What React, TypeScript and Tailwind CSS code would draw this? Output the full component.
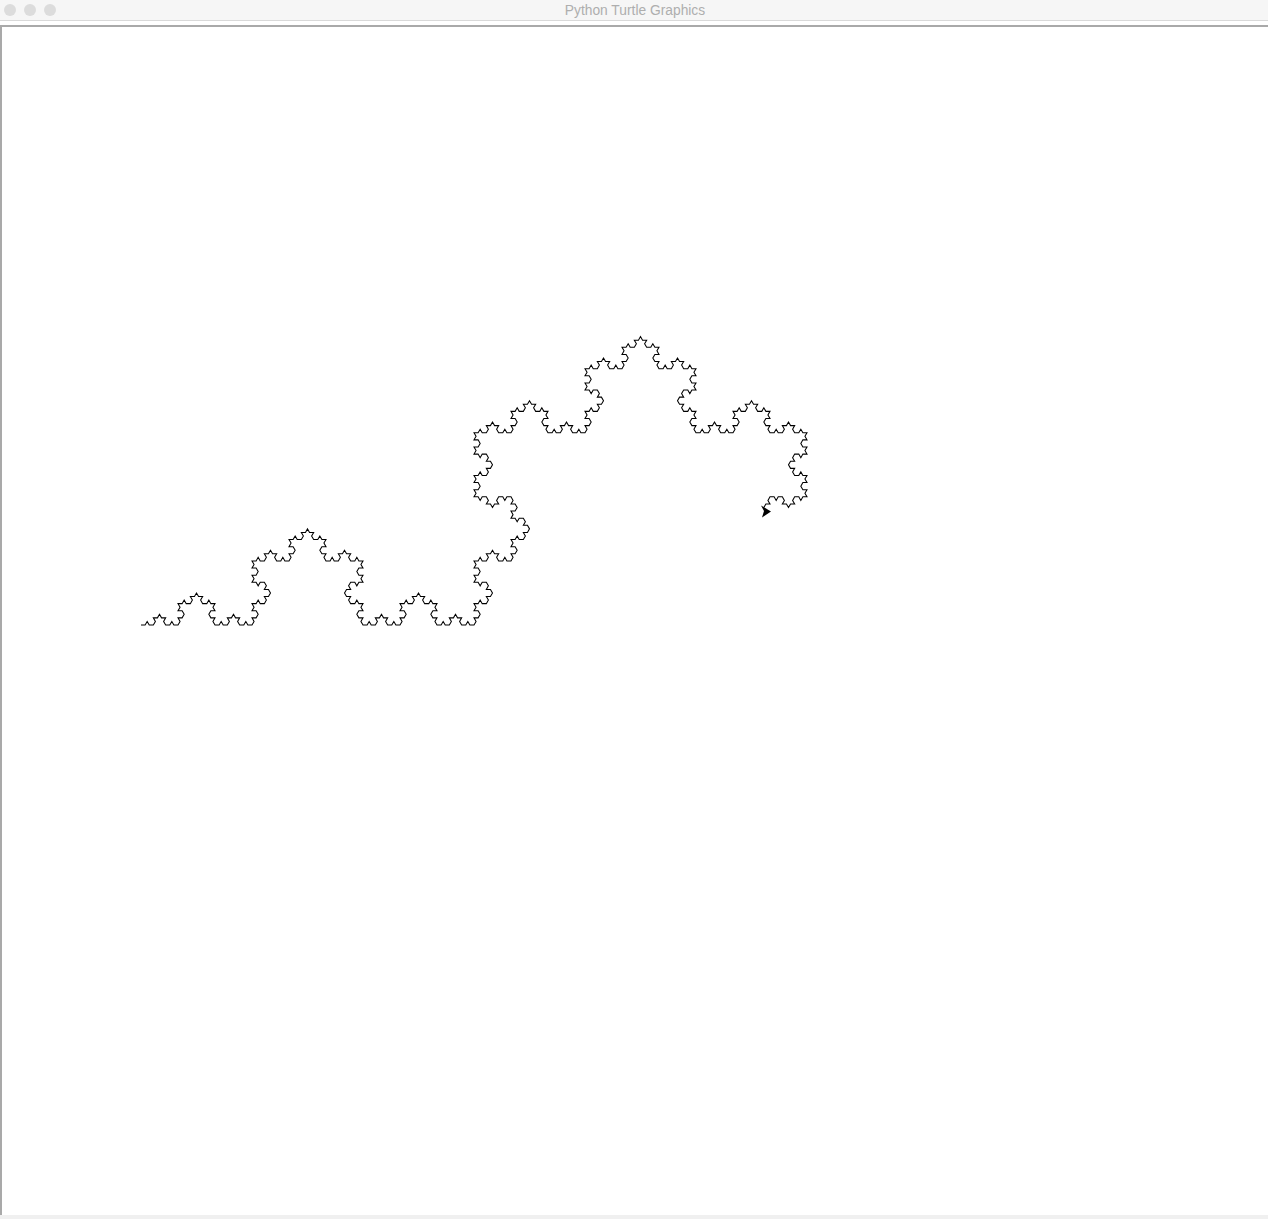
import React from 'react';

// koch curve, step is 999 / 3^5 so the full curve would be 999 wide
const buildPath = (maxSegments: number) => {
  let x = 141;
  let y = 625;
  let heading = 0;
  let count = 0;
  const step = 999 / 243;
  const points: string[] = [`M${x} ${y}`];
  const koch = (level: number) => {
    if (level === 0) {
      if (count >= maxSegments) return;
      x += step * Math.cos((heading * Math.PI) / 180);
      y -= step * Math.sin((heading * Math.PI) / 180);
      points.push(`L${x.toFixed(2)} ${y.toFixed(2)}`);
      count++;
      return;
    }
    koch(level - 1);
    heading += 60;
    koch(level - 1);
    heading -= 120;
    koch(level - 1);
    heading += 60;
    koch(level - 1);
  };
  koch(5);
  return { d: points.join(''), x, y };
};

const trafficLights = [0, 1, 2];

export default function App() {
  const curve = buildPath(692);
  return (
    <div className="w-[1268px] h-[1219px] flex flex-col bg-white overflow-hidden font-['Liberation_Sans',sans-serif]">
      <div className="h-[21px] flex-none relative flex items-center justify-center bg-[#f6f6f6] border-b border-[#d9d9d9]">
        <div className="absolute left-[4px] top-[4px] flex gap-2">
          {trafficLights.map((n) => (
            <div key={n} className="w-3 h-3 rounded-full bg-[#dcdcdc]" />
          ))}
        </div>
        <span className="text-[13.8px] leading-none text-[#aeaeae] ml-[2px] pt-[2px]">Python Turtle Graphics</span>
      </div>
      <div className="h-[4px] flex-none bg-white" />
      <div className="flex-1 relative border-t-2 border-l-2 border-[#a9a9a9] bg-white">
        <svg className="absolute -left-[2px] -top-[27px] w-[1268px] h-[1219px]" viewBox="0 0 1268 1219" fill="none">
          <path d={curve.d} stroke="#000" strokeWidth="1.05" strokeLinejoin="miter" />
          <polygon points="771,511.5 761,505.5 764,511 762,517.5" fill="#000" />
        </svg>
      </div>
      <div className="h-[4px] flex-none bg-[#f0f0f0]" />
    </div>
  );
}
